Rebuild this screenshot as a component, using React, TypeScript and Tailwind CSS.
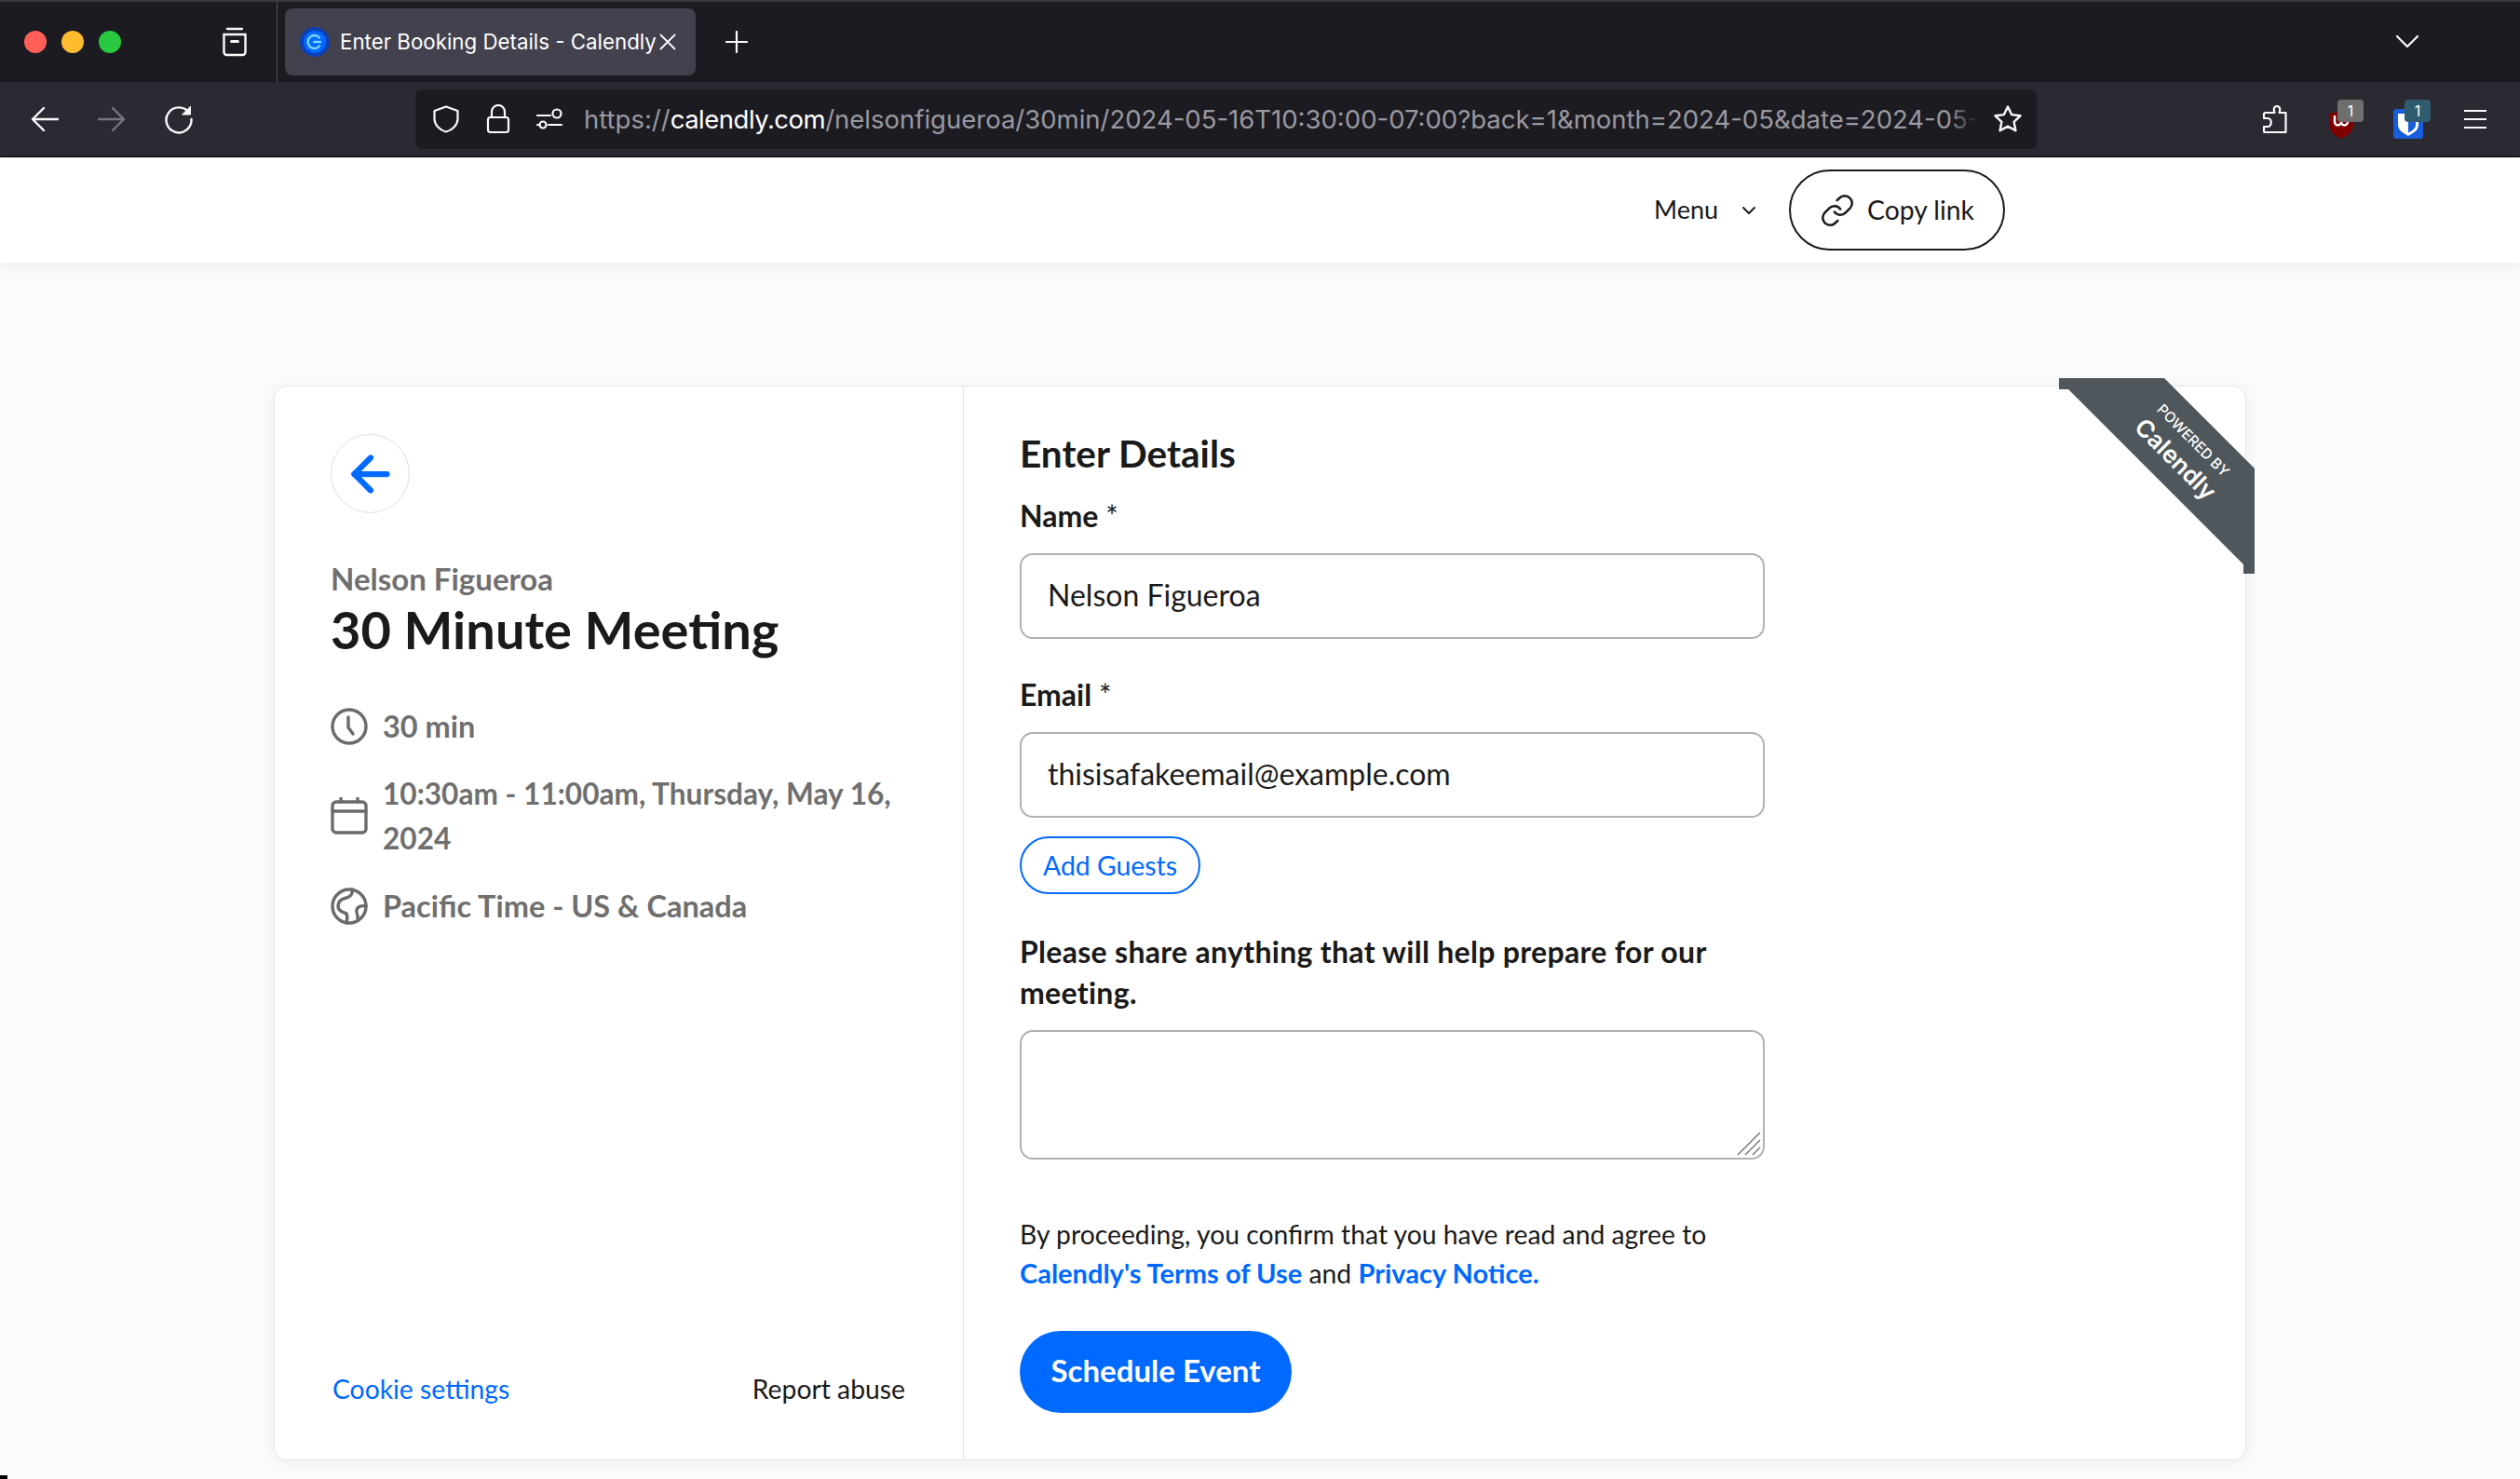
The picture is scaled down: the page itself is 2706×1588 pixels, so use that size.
// App.tsx — Calendly "Enter Details" booking page inside a dark Firefox window.
import { ArrowLeft, ChevronDown, Link as LinkIcon } from "lucide-react";

const BODY_FONT = "font-['Lato','Liberation_Sans',sans-serif]";
const UI_FONT = "font-['Inter','Liberation_Sans',sans-serif]";

function TabStrip() {
    return (
        <div className="flex h-[88px] items-center border-t-2 border-[#3a3942] bg-[#1c1b22] text-white">
            <div className="ml-[26px] flex gap-4">
                <span className="h-6 w-6 rounded-full bg-[#ff5f57]" />
                <span className="h-6 w-6 rounded-full bg-[#febc2e]" />
                <span className="h-6 w-6 rounded-full bg-[#28c840]" />
            </div>
            {/* Firefox view */}
            <svg className="ml-[106px] h-[32px] w-[32px]" viewBox="0 0 32 32" fill="none" stroke="#fbfbfe" strokeWidth="2.4" strokeLinecap="round">
                <path d="M8 2h16M4.5 8h23V27a3 3 0 0 1-3 3H7.500a3 3 0 0 1-3-3V8z" />
                <path d="M12.500 15.500h7" strokeWidth="3" />
            </svg>
            <div className="ml-[29px] h-full w-px bg-[#55545c]" />
            <div className={`ml-2 flex h-[72px] w-[441px] items-center rounded-lg bg-[#42414d] pl-4 ${UI_FONT}`}>
                <svg className="h-8 w-8 shrink-0" viewBox="0 0 32 32" fill="none">
                    <circle cx="16" cy="16" r="16" fill="#0b3fb8" />
                    <circle cx="16" cy="16" r="12" fill="#0069ff" />
                    <path d="M21 11.500a7 7 0 1 0 0 9M15 16h7" stroke="#7fd4ff" strokeWidth="2.400" strokeLinecap="round" />
                </svg>
                <span className="ml-[11px] text-[22.3px] leading-none whitespace-nowrap">Enter Booking Details - Calendly</span>
                <svg className="ml-[2px] h-[20px] w-[20px] shrink-0" viewBox="0 0 20 20" stroke="#fbfbfe" strokeWidth="1.800" strokeLinecap="round">
                    <path d="M2.500 2.500l15 15M17.500 2.500l-15 15" />
                </svg>
            </div>
            <svg className="ml-[32px] h-6 w-6" viewBox="0 0 24 24" stroke="#fbfbfe" strokeWidth="2.200" strokeLinecap="round">
                <path d="M12 1v22M1 12h22" />
            </svg>
            <svg className="mr-[108px] ml-auto h-[16px] w-[26px]" viewBox="0 0 26 16" fill="none" stroke="#fbfbfe" strokeWidth="2.200" strokeLinecap="round" strokeLinejoin="round">
                <path d="M2 2l11 11L24 2" />
            </svg>
        </div>
    );
}

function ToolbarIcons() {
    return (
        <div className="flex items-center">
            <svg className="h-[32px] w-[32px]" viewBox="0 0 32 32" fill="none" stroke="#fbfbfe" strokeWidth="2.400" strokeLinecap="round" strokeLinejoin="round">
                <path d="M30 16H3M15 4L3 16l12 12" />
            </svg>
            <svg className="ml-[40px] h-[32px] w-[32px]" viewBox="0 0 32 32" fill="none" stroke="#77767d" strokeWidth="2.400" strokeLinecap="round" strokeLinejoin="round">
                <path d="M2 16h27M17 4l12 12-12 12" />
            </svg>
            <svg className="ml-[40px] h-[32px] w-[32px]" viewBox="0 0 32 32" fill="none" stroke="#fbfbfe" strokeWidth="2.400" strokeLinecap="round" strokeLinejoin="round">
                <path d="M27 9A13.500 13.500 0 1 0 29.500 16" />
                <path d="M28.500 2.500v8.500h-8.500z" fill="#fbfbfe" strokeWidth="1" />
            </svg>
        </div>
    );
}

function UrlBar() {
    return (
        <div className={`ml-[238px] flex h-16 w-[1741px] items-center rounded-lg bg-[#1c1b22] ${UI_FONT}`}>
            <svg className="ml-[18px] h-[30px] w-[30px] shrink-0" viewBox="0 0 30 30" fill="none" stroke="#fbfbfe" strokeWidth="2.200" strokeLinejoin="round">
                <path d="M15 1.500l12.500 4.500v8.500c0 6.500-5.500 12-12.500 14-7-2-12.500-7.500-12.500-14V6z" />
            </svg>
            <svg className="ml-[28px] h-[32px] w-[26px] shrink-0" viewBox="0 0 26 32" fill="none" stroke="#fbfbfe" strokeWidth="2.200" strokeLinejoin="round">
                <path d="M6 14V8a7 7 0 0 1 14 0v6" />
                <rect x="2" y="14" width="22" height="16" rx="2.500" />
            </svg>
            <svg className="ml-[27px] h-[28px] w-[30px] shrink-0" viewBox="0 0 30 28" fill="none" stroke="#fbfbfe" strokeWidth="2.200" strokeLinecap="round">
                <path d="M2 10h14M2 20h3M14 20h14" />
                <circle cx="23" cy="8" r="4.500" />
                <circle cx="8" cy="20" r="3.500" />
            </svg>
            <div className="relative ml-[22px] min-w-0 flex-1 overflow-hidden">
                <p className="text-[27.5px] leading-9 whitespace-nowrap text-[#9a99a0]">
                    https://<span className="tracking-[-0.5px] text-white">calendly.com</span>/nelsonfigueroa/30min/2024-05-16T10:30:00-07:00?back=1&amp;month=2024-05&amp;date=2024-05-16
                </p>
                <div className="absolute top-0 right-0 h-full w-8 bg-gradient-to-r from-transparent to-[#1c1b22]" />
            </div>
            <svg className="mr-[15px] ml-[16px] h-[32px] w-[32px] shrink-0" viewBox="0 0 32 32" fill="none" stroke="#fbfbfe" strokeWidth="2.400" strokeLinejoin="round">
                <path d="M16 2.500l4.100 8.600 9.400 1.200-6.900 6.500 1.800 9.400-8.400-4.600-8.400 4.600 1.800-9.400-6.900-6.500 9.400-1.200z" />
            </svg>
        </div>
    );
}

function Extensions() {
    return (
        <div className={`ml-auto flex items-center ${UI_FONT}`}>
            {/* puzzle piece */}
            <svg className="h-[32px] w-[28px]" viewBox="0 0 28 32" fill="none" stroke="#fbfbfe" strokeWidth="2.200" strokeLinejoin="round">
                <path d="M10 9h3.500c-1-2-1.500-7 2.500-7s3.500 5 2.500 7h7v21H3.500a1.500 1.500 0 0 1-1.500-1.500V24h4c5 0 5-9 0-9H2V10.500C2 9.500 2.500 9 3.500 9z" />
            </svg>
            {/* uBlock */}
            <div className="relative ml-[43px] h-[42px] w-[38px]">
                <svg className="absolute bottom-0 left-0 h-[30px] w-[28px]" viewBox="0 0 28 30">
                    <path d="M1 3l13-3 13 3v11c0 8-6 13-13 16C7 27 1 22 1 14z" fill="#800000" />
                    <path d="M7 5v7a3.500 3.500 0 0 0 7 0 3.500 3.500 0 0 0 7 0V5" fill="none" stroke="#fff" strokeWidth="2.500" />
                </svg>
                <span className="absolute top-0 right-0 flex h-6 w-[28px] items-center justify-center rounded bg-[#6e6e6e] text-[16px] text-white">1</span>
            </div>
            {/* Bitwarden */}
            <div className="relative ml-[32px] h-[42px] w-[40px]">
                <svg className="absolute bottom-0 left-0 h-[32px] w-[32px]" viewBox="0 0 32 32">
                    <rect width="32" height="32" rx="3" fill="#175ddc" />
                    <path d="M5 5h22v12c0 6-6 9-11 12-5-3-11-6-11-12z" fill="#fff" />
                    <path d="M16 7.500h8v9.500c0 4-4 6.500-8 8.500z" fill="#175ddc" />
                </svg>
                <span className="absolute top-0 right-0 flex h-6 w-[28px] items-center justify-center rounded bg-[#2f5c6e] text-[16px] text-white">1</span>
            </div>
            {/* hamburger */}
            <svg className="mr-[36px] ml-[36px] h-[22px] w-[24px]" viewBox="0 0 24 22" stroke="#fbfbfe" strokeWidth="2.200">
                <path d="M0 2h24M0 11h24M0 20h24" />
            </svg>
        </div>
    );
}

function BrowserChrome() {
    return (
        <div className="shrink-0">
            <TabStrip />
            <div className="flex h-[81px] items-center border-b border-black bg-[#2b2a33] pl-[32px]">
                <ToolbarIcons />
                <UrlBar />
                <Extensions />
            </div>
        </div>
    );
}

function Field({ label, value, labelTop }: { label: string; value: string; labelTop: string }) {
    return (
        <>
            <p className={`${labelTop} text-[32px] leading-10 font-bold`}>
                {label} <span className="font-normal">*</span>
            </p>
            <div className="mt-[20px] flex h-[92px] w-[800px] items-center rounded-[14px] border-2 border-[#b2b2b2] pb-[3px] pl-[28px] text-[32px]">{value}</div>
        </>
    );
}

function MetaIcon({ kind }: { kind: "clock" | "calendar" | "globe" }) {
    return (
        <svg className="h-10 w-10 shrink-0" viewBox="0 0 40 40" fill="none" stroke="#6b6b6b" strokeWidth="3.400" strokeLinecap="round" strokeLinejoin="round">
            {kind === "clock" && (
                <>
                    <circle cx="20" cy="20" r="18" />
                    <path d="M19 10v11l5 7" />
                </>
            )}
            {kind === "calendar" && (
                <>
                    <rect x="2" y="5" width="36" height="33" rx="4" />
                    <path d="M2 15h36M11 1v4M29 1v4" />
                </>
            )}
            {kind === "globe" && (
                <>
                    <circle cx="20" cy="20" r="18" />
                    <path d="M23 2c1 5-2 8-6 9-5 1-9 3-9 9 0 5 4 6 7 7 4 1 3 6 2 11" />
                    <path d="M38 20c-4-1-9 0-10 4-1 3 2 5 1 10" />
                </>
            )}
        </svg>
    );
}

function EventSummary() {
    return (
        <aside className="flex w-[740px] shrink-0 flex-col border-r border-[#e2e3e5] pt-[51px] pr-[60px] pb-[56px] pl-[60px]">
            <div className="flex h-[85px] w-[85px] items-center justify-center rounded-full border border-[#dcdee0]">
                <ArrowLeft className="h-[60px] w-[60px] text-[#0069ff]" strokeWidth={2.5} />
            </div>
            <p className="mt-[50px] text-[33px] leading-10 font-bold text-[#6f6f6f]">Nelson Figueroa</p>
            <h1 className="text-[56px] leading-[70px] font-bold text-[#1a1a1a]">30 Minute Meeting</h1>
            <div className="mt-[45px] flex items-center gap-[16px] text-[32.500px] leading-[48px] font-bold text-[#6f6f6f]">
                <MetaIcon kind="clock" />
                <span>30 min</span>
            </div>
            <div className="mt-[24px] flex items-center gap-[16px] text-[31.600px] leading-[48px] font-bold text-[#6f6f6f]">
                <MetaIcon kind="calendar" />
                <span>10:30am - 11:00am, Thursday, May 16, 2024</span>
            </div>
            <div className="mt-[25px] flex items-center gap-[16px] text-[32.500px] leading-[48px] font-bold text-[#6f6f6f]">
                <MetaIcon kind="globe" />
                <span>Pacific Time - US &amp; Canada</span>
            </div>
            <div className="mt-auto ml-[2px] mr-[2px] flex items-center justify-between text-[28.300px] leading-10">
                <a className="text-[#0069ff]">Cookie settings</a>
                <a className="text-[#1a1a1a]">Report abuse</a>
            </div>
        </aside>
    );
}

function DetailsForm() {
    return (
        <section className="flex-1 pt-[47px] pl-[60px]">
            <h2 className="text-[40.500px] leading-[50px] font-bold">Enter Details</h2>
            <Field label="Name" value="Nelson Figueroa" labelTop="mt-[22px]" />
            <Field label="Email" value="thisisafakeemail@example.com" labelTop="mt-[40px]" />
            <button className="mt-[20px] flex h-[62px] w-[194px] items-center justify-center rounded-full border-2 border-[#0069ff] text-[28.400px] text-[#0069ff]">
                Add Guests
            </button>
            <p className="mt-[40px] w-[800px] text-[32px] leading-[44px] font-bold tracking-[0.3px]">Please share anything that will help prepare for our meeting.</p>
            <div className="relative mt-[18px] h-[139px] w-[800px] rounded-[14px] border-2 border-[#b2b2b2]">
                <svg className="absolute right-[2px] bottom-[2px] h-[26px] w-[26px]" viewBox="0 0 26 26" stroke="#777" strokeWidth="1.500">
                    <path d="M1 25L25 1M9 25L25 9M17 25l8-8" />
                </svg>
            </div>
            <p className="mt-[59px] text-[28.300px] leading-[42px]">
                By proceeding, you confirm that you have read and agree to
                <br />
                <a className="text-[29px] font-bold text-[#0069ff]">Calendly's Terms of Use</a> and <a className="text-[29px] font-bold text-[#0069ff]">Privacy Notice.</a>
            </p>
            <button className="mt-[41px] h-[88px] w-[292px] rounded-full bg-[#0069ff] pb-[3px] text-[33px] font-bold text-white">Schedule Event</button>
        </section>
    );
}

function Ribbon() {
    return (
        <div className="absolute top-[-9px] right-[-10px] h-[210px] w-[210px]">
            <svg className="absolute inset-0 h-full w-full" viewBox="0 0 210 210">
                <path d="M0 0h113l97 97v113h-12v-10L10 12H0z" fill="#50575c" />
            </svg>
            <div className={`absolute top-[67px] left-[144px] -translate-x-1/2 -translate-y-1/2 rotate-45 text-[15.5px] leading-none font-medium whitespace-nowrap text-white ${UI_FONT}`}>
                POWERED BY
            </div>
            <div className={`absolute top-[87px] left-[125px] -translate-x-1/2 -translate-y-1/2 rotate-45 text-[26px] leading-none font-semibold whitespace-nowrap text-white ${UI_FONT}`}>
                Calendly
            </div>
        </div>
    );
}

export default function App() {
    return (
        <div className={`relative flex h-[1588px] flex-col overflow-hidden bg-[#fafbfd] text-[#1a1a1a] ${BODY_FONT}`}>
            <BrowserChrome />
            <header className="flex h-[113px] shrink-0 items-center bg-white pl-[1776px] shadow-[0_2px_16px_rgba(0,0,0,0.08)]">
                <span className="text-[27px]">Menu</span>
                <ChevronDown className="ml-[21px] h-6 w-6" strokeWidth={2} />
                <button className="ml-[31px] flex h-[87px] w-[232px] items-center justify-center gap-[13px] rounded-full border-2 border-[#1a1a1a] text-[28.300px]">
                    <LinkIcon className="h-[38px] w-[38px]" strokeWidth={1.6} />
                    Copy link
                </button>
            </header>
            <main className="flex-1 pt-[132px]">
                <div className="relative mx-auto flex h-[1154px] w-[2118px] rounded-[14px] border border-[#e6e7e9] bg-white shadow-[0_2px_16px_rgba(0,0,0,0.06)]">
                    <EventSummary />
                    <DetailsForm />
                    <Ribbon />
                </div>
            </main>
            {/* stray black tick in the bottom-left corner of the capture */}
            <div className="absolute bottom-0 left-0 h-1 w-2 bg-black" />
        </div>
    );
}
